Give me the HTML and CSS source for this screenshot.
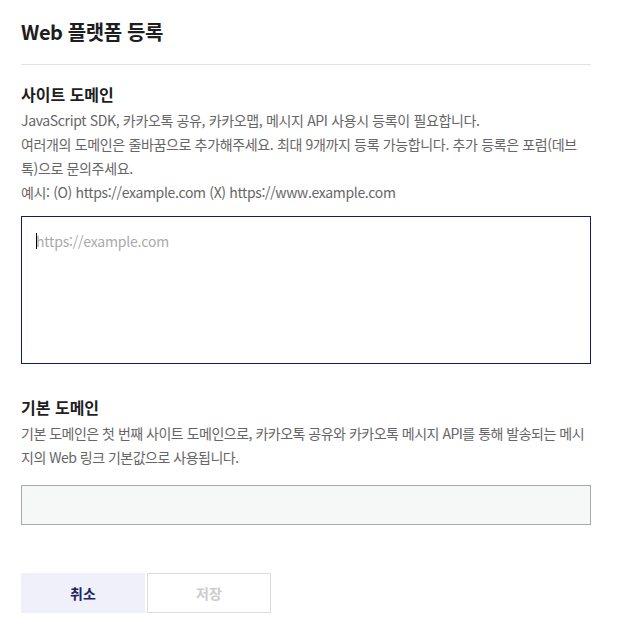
FILE: index.html
```html
<!DOCTYPE html>
<html lang="ko">
<head>
    <meta charset="UTF-8">
    <meta name="viewport" content="width=device-width, initial-scale=1.0">
    <title>Web 플랫폼 등록</title>
    <link rel="stylesheet" href="styles.css">
</head>
<body>
    <div class="panel">
        <h1 class="panel-title">Web 플랫폼 등록</h1>

        <div class="field">
            <h2 class="field-title">사이트 도메인</h2>
            <p class="field-desc">
                JavaScript SDK, 카카오톡 공유, 카카오맵, 메시지 API 사용시 등록이 필요합니다.<br>
                여러개의 도메인은 줄바꿈으로 추가해주세요. 최대 9개까지 등록 가능합니다. 추가 등록은 포럼(데브톡)으로 문의주세요.<br>
                예시: (O) https://example.com (X) https://www.example.com
            </p>
            <div class="domain-box">
                <textarea class="domain-input" placeholder="https://example.com"></textarea>
            </div>
        </div>

        <div class="field field-base">
            <h2 class="field-title">기본 도메인</h2>
            <p class="field-desc field-desc-tight">
                기본 도메인은 첫 번째 사이트 도메인으로, 카카오톡 공유와 카카오톡 메시지 API를 통해 발송되는 메시지의 Web 링크 기본값으로 사용됩니다.
            </p>
            <div class="base-input"></div>
        </div>

        <div class="actions">
            <button type="button" class="btn btn-cancel">취소</button>
            <button type="button" class="btn btn-save" disabled>저장</button>
        </div>
    </div>
</body>
</html>
```

FILE: styles.css
```css
body {
    margin: 0;
    padding: 0;
    background-color: #fff;
    font-family: "Noto Sans CJK KR", "Noto Sans", sans-serif;
    color: #1e1e1e;
}

.panel {
    padding: 17px 27px 0 21px;
}

.panel-title {
    margin: 0;
    padding-bottom: 17px;
    font-size: 20px;
    line-height: 30px;
    font-weight: bold;
    letter-spacing: -0.4px;
    border-bottom: 1px solid #e3e3e3;
}

.field {
    margin-top: 17px;
}

.field-title {
    margin: 0;
    font-size: 16px;
    line-height: 24px;
    font-weight: bold;
}

.field-desc {
    margin: 2px 0 0;
    font-size: 14px;
    line-height: 24px;
    color: #666;
    letter-spacing: -0.35px;
}

.field-desc-tight {
    letter-spacing: -0.5px;
}

.domain-box {
    position: relative;
    margin-top: 12px;
}

/* 포커스 상태의 커서 */
.domain-box::after {
    content: "";
    position: absolute;
    left: 15px;
    top: 17px;
    width: 1px;
    height: 16px;
    background-color: #000;
}

.domain-input {
    display: block;
    width: 100%;
    height: 148px;
    box-sizing: border-box;
    padding: 13px 14px;
    border: 1px solid #0f1f5c;
    border-radius: 0;
    font-family: inherit;
    font-size: 14px;
    line-height: 22px;
    letter-spacing: -0.2px;
    resize: none;
    outline: none;
}

.domain-input::placeholder {
    color: #aaa;
}

.field-base {
    margin-top: 31px;
}

.base-input {
    margin-top: 16px;
    height: 40px;
    box-sizing: border-box;
    border: 1px solid #a9a9a9;
    background-color: #f6f7f7;
}

.actions {
    display: flex;
    gap: 2px;
    margin-top: 48px;
}

.btn {
    width: 124px;
    height: 40px;
    box-sizing: border-box;
    font-family: inherit;
    font-size: 14px;
    font-weight: bold;
    cursor: pointer;
}

.btn-cancel {
    border: none;
    background-color: #eff0f9;
    color: #1a2561;
}

.btn-save {
    border: 1px solid #dcdcdc;
    background-color: #fff;
    color: #ccc;
}
```
